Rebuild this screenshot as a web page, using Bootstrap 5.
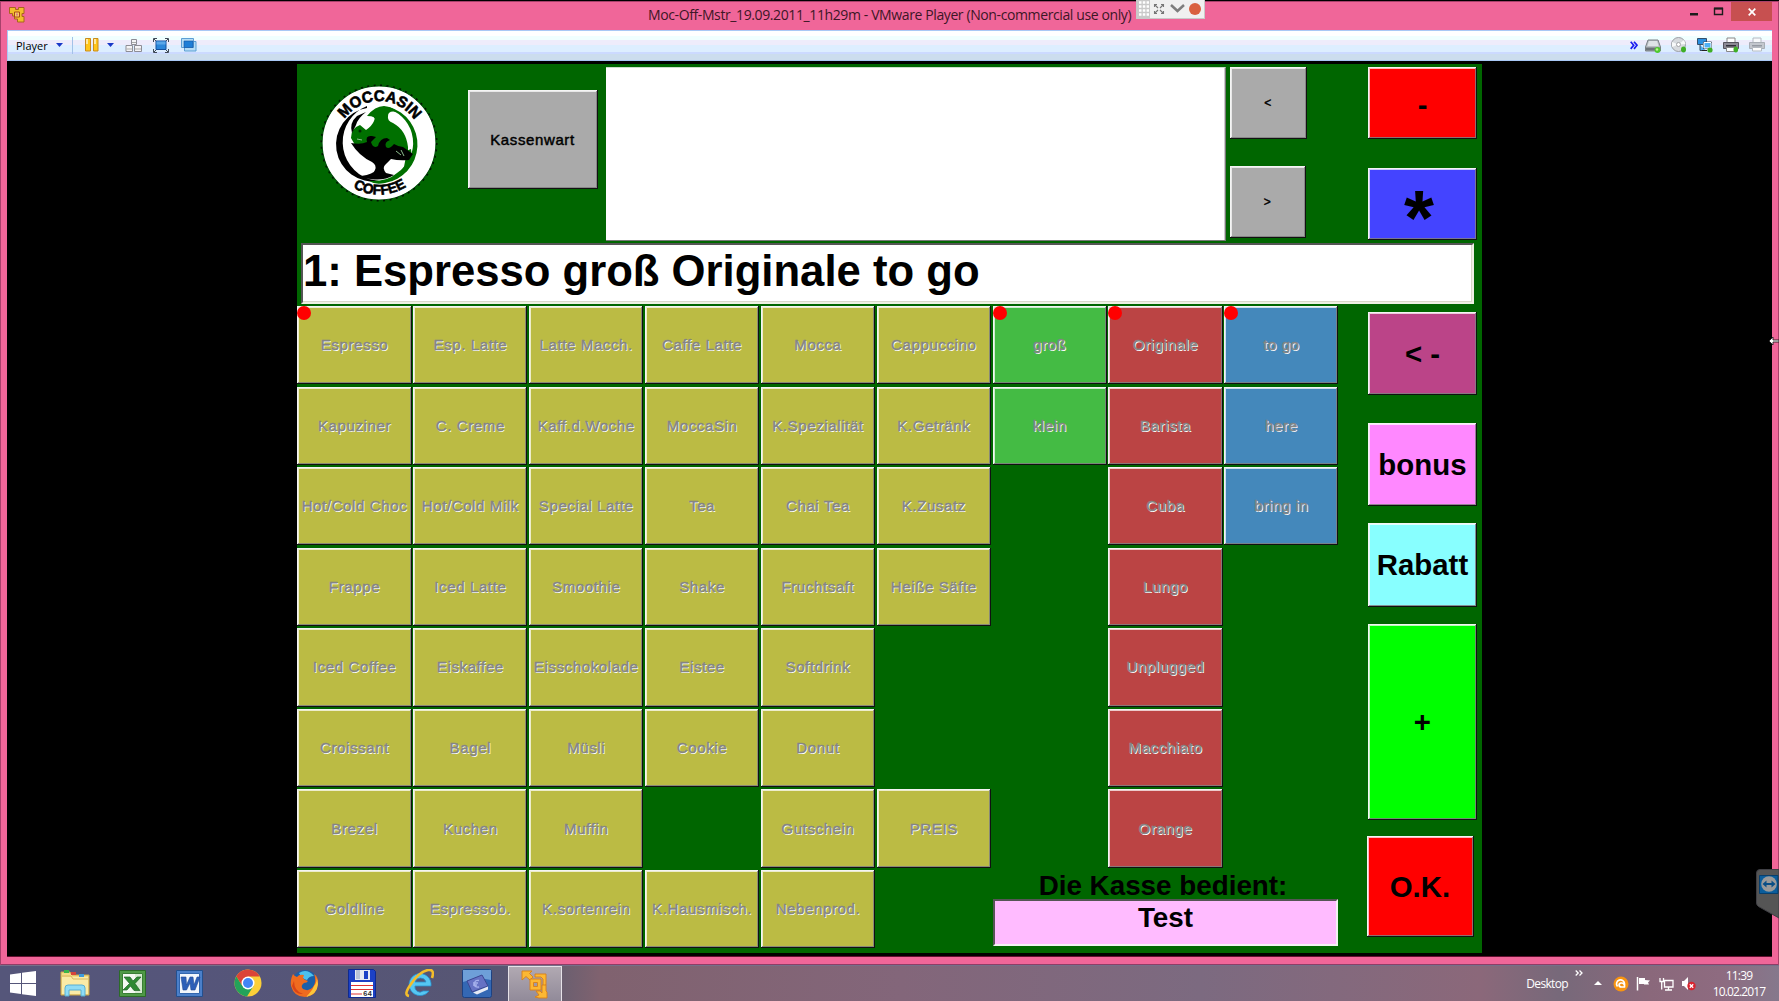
<!DOCTYPE html>
<html lang="de">
<head>
<meta charset="utf-8">
<title>Moc-Off-Mstr - VMware Player</title>
<link rel="stylesheet" href="https://cdn.jsdelivr.net/npm/bootstrap@5.3.0/dist/css/bootstrap.min.css">
<style>
  html, body { height: 100%; }
  body { width: 1779px; height: 1001px; overflow: hidden; background: #000; font-family: "Open Sans", "Noto Sans", sans-serif; line-height: 1; color: #000; }
  svg { display: block; flex: none; }

  /* window frame */
  .win-frame { height: 965px; background: #f06699; border-top: 1px solid #000; box-shadow: inset 1px 0 #a8416b, inset -1px 0 #a8416b, inset 0 1px #a8416b, inset 0 -1px #8f3d66; padding: 0 7px 8px 7px; }
  .win-title { height: 29px; }
  .win-title .caption-text { font-size: 14px; letter-spacing: -.39px; color: #3d1626; white-space: nowrap; margin-left: 623px; padding-top: 7px; line-height: 14px; }
  .win-close { width: 41px; height: 19px; background: #c75050; margin-top: 1px; }
  .tool-strip { height: 31px; border: 1px solid #a9c8f5; border-width: 1px 0 1px 1px; background: linear-gradient(#fff 0 5px, #f0ffff 5px 9px, #eeecfb 9px 14px, #ddeeff 14px 21px, #ccdaff 21px 23px, #ccddee 23px); font-size: 11px; padding-bottom: 1px; }
  .strip-sep { width: 1px; height: 17px; background: #a3c2e8; }
  .vm-screen { flex: 1; background: #000; padding: 3px 0 0 290px; border-bottom: 1px solid #601030; }

  /* cash register */
  .till { width: 1185px; height: 889px; background: #006600; font-family: "Liberation Sans", Arial, sans-serif; font-weight: 700; }
  .till-head { height: 179px; }
  .key { border: 0; border-radius: 0; padding: 0; color: #000; font-weight: 700; font-size: 15px; line-height: 1; display: flex; align-items: center; justify-content: center; white-space: nowrap; box-shadow: inset -1px -1px #111, inset 1px 1px #f4f4f4, inset -2px -2px rgba(128,128,128,.85), inset 2px 2px rgba(255,255,255,.72); }
  .key-small { font-weight: 400; letter-spacing: .62px; -webkit-text-stroke: .45px currentColor; }
  .k-gray { background: #aaa; }
  .k-red { background: #f00; }
  .receipt { width: 620px; height: 174px; background: #fff; border: 1px solid #777; border-width: 1px 1px 1px 0; border-top-color: #cdc; box-shadow: inset -1px 0 #ccc; }
  .entry-line { height: 61px; margin: 0 8px 0 4px; background: #fff; border: 2px solid #555; border-right-color: #eef0e4; border-bottom-color: #eef0e4; box-shadow: inset -1px -1px #d8d8c8; font-size: 43.65px; line-height: 51px; white-space: nowrap; }
  .till-body { padding-top: 2px; }
  .prod-grid { display: grid; grid-template-columns: repeat(9, 114.2px); grid-template-rows: repeat(8, 78.2px); column-gap: 1.68px; row-gap: 2.4px; margin-left: .4px; }
  .prod-grid .key { position: relative; color: #858585; text-shadow: 1px 1px 0 #fff; padding-bottom: 1px; }
  .k-prod { background: #bbbb44; }
  .k-size { background: #44bb44; }
  .k-kind { background: #bb4444; }
  .k-place { background: #4488bb; }
  .sel-dot::before { content: ""; position: absolute; left: 0; top: 0; width: 14px; height: 14px; border-radius: 50%; background: #f00; }
  .cashier { font-size: 27.8px; }
  .cashier-label { height: 29px; padding-top: 3px; text-align: center; padding-right: 5px; line-height: 26px; }
  .cashier-name { height: 47px; background: #ffbbff; border: 2px solid #555; border-right-color: #f2f2f2; border-bottom-color: #f2f2f2; text-align: center; line-height: 33px; }
  .side-keys { margin: 5.5px 0 0 30px; width: 109px; }
  .side-keys .key { font-size: 29.4px; width: 109px; padding: 1px 1px 0 0; }

  /* overlays */
  .tv-bar { position: absolute; left: 1136px; top: 0; width: 69px; height: 19px; }
  .tv-tab { position: absolute; left: 1756px; top: 869px; }
  .size-cursor { position: absolute; left: 1768px; top: 334px; }

  /* taskbar */
  .task-bar { height: 36px; color: #fff; background: linear-gradient(90deg, #55567a 0, #55557a 200px, #575673 500px, #6a5f70 560px, #80626f 600px, #83667a 900px, #7c6a80 1200px, #8b687a 1480px, #77697a 1560px, #8a687b 1650px, #8e6b80 1720px, #85788c 1779px); box-shadow: inset 0 1px #75708a; }
  .task-item { width: 57.4px; height: 35px; display: flex; align-items: center; justify-content: center; }
  .task-active { width: 54px; margin-left: 2px; background: linear-gradient(#b1a9b2, #918a99); border: 1px solid #e6e2e8; border-bottom: 0; }
  .clock-box { font-size: 12px; line-height: 16px; letter-spacing: -.85px; text-align: center; width: 60px; padding-top: 1px; }
</style>
</head>
<body>
<div class="win-frame d-flex flex-column">
  <div class="win-title d-flex align-items-start">
    <svg width="16" height="16" viewBox="0 0 16 16" style="margin:6px 0 0 2px"><path d="M.5.500h6v2h3v-2h5.500v6h-2v3h2v5.500H8.500v-3H5.500V9h-2V6.500h-3z" fill="#f3bd2c" stroke="#a8651c"/><path d="M5.500 5h5v5h-5z" fill="#f7d35b" stroke="#a8451c"/><path d="M7 6.500h2v2H7z" fill="#e2788d"/></svg>
    <div class="caption-text">Moc-Off-Mstr_19.09.2011_11h29m - VMware Player (Non-commercial use only)</div>
    <div class="d-flex ms-auto">
      <svg width="55" height="24" viewBox="0 0 55 24"><path d="M14 12h8v2.500h-8z" fill="#1c1c1c"/><path d="M38.500 7.500h8v6h-8z" fill="none" stroke="#1c1c1c" stroke-width="1.400"/><path d="M38 6.500h9v2h-9z" fill="#1c1c1c"/></svg>
      <div class="win-close d-flex align-items-center justify-content-center"><svg width="8" height="8" viewBox="0 0 8 8"><path d="M.7.700l6.600 6.600M7.300.7L.7 7.300" stroke="#fff" stroke-width="1.700"/></svg></div>
    </div>
  </div>

  <div class="tool-strip d-flex align-items-center">
    <span class="ms-2">Player</span>
    <svg width="7" height="5" viewBox="0 0 7 5" style="margin-left:8px"><path d="M0 0h7L3.500 4z" fill="#1838c8"/></svg>
    <div class="strip-sep" style="margin-left:9px"></div>
    <svg width="14" height="14" viewBox="0 0 14 14" style="margin-left:12px"><path d="M.5.500h5v12.500h-5zM8.500.500h4.500v12.500H8.500z" fill="#ffc61a" stroke="#c98b1d"/><path d="M1 1h2v5H1zM9 1h2v5H9z" fill="#ffe9a0"/></svg>
    <svg width="7" height="5" viewBox="0 0 7 5" style="margin-left:8px"><path d="M0 0h7L3.500 4z" fill="#1838c8"/></svg>
    <svg width="18" height="15" viewBox="0 0 18 15" style="margin-left:11px"><path d="M6.500 1.500h5v5h-5zM1 7.500h6.500v6H1zM9.500 7.500h7v6h-7z" fill="#f4f4f6" stroke="#8d8d95"/><path d="M1.500 11h6M10 11h6M7 4.500h4" stroke="#aaa"/></svg>
    <svg width="16" height="15" viewBox="0 0 16 15" style="margin-left:10px"><path d="M3 3h10v8.500H3z" fill="#2b86d9" stroke="#15509d"/><path d="M3.500 3.500h9v3h-9z" fill="#5aa6e8"/><path d="M.5 4V.500H4M12 .5h3.500V4M15.500 11v3.500H12M4 14.500H.5V11M1 1l2 2M15 1l-2 2M1 14l2-2M15 14l-2-2" fill="none" stroke="#404a58"/></svg>
    <svg width="16" height="14" viewBox="0 0 16 14" style="margin-left:12px"><path d="M.5.500h12v9H.5zM3.500 3.500h11.500v9.500H3.500z" fill="#b4dcf5" stroke="#5d9fd4"/><path d="M3 3h9v6.500H3z" fill="#1f7ed6" stroke="#15509d" stroke-width=".6"/></svg>
    <div class="d-flex align-items-center ms-auto" style="margin-right:7px;gap:10px">
      <svg width="8" height="9" viewBox="0 0 8 9" style="margin-right:-3px"><path d="M.7.700l3 3.500-3 3.700M4 .7l3 3.500-3 3.700" fill="none" stroke="#1c1cf0" stroke-width="1.700"/></svg>
      <svg width="16" height="15" viewBox="0 0 16 15"><path d="M3 2h10l2.500 7v4H.5V9z" fill="#b9bec4" stroke="#7b8085"/><path d="M1 9.500h14v3H1z" fill="#6d7479"/><path d="M4 3h8l1.500 5h-11z" fill="#dfe3e6"/><circle cx="12.500" cy="12" r="2.900" fill="#4fc92e"/><circle cx="12" cy="11.500" r="1.200" fill="#b8f58e"/></svg>
      <svg width="16" height="16" viewBox="0 0 16 16"><circle cx="7.500" cy="7.500" r="7" fill="#d7dade" stroke="#9b9fa5"/><path d="M7.500 7.500L1 5v5zM7.500 7.500L13 3l1.500 4z" fill="#f8f9fa"/><circle cx="7.500" cy="7.500" r="2" fill="#fff" stroke="#a5a5aa"/><ellipse cx="12.500" cy="12.500" rx="2.500" ry="3" fill="#3fae26"/></svg>
      <svg width="16" height="16" viewBox="0 0 16 16"><path d="M.5 1.500h9v6h-9z" fill="#2b8fe0" stroke="#36506b"/><path d="M3 8v5.500h6M6.500 5h8v6.500h-8z" fill="#4fb1f5" stroke="#34485d"/><path d="M7 5.500h7v5.500H7z" fill="none" stroke="#fff"/><path d="M5 13.500h5" stroke="#222"/><circle cx="13" cy="13" r="2.600" fill="#3fae26"/></svg>
      <svg width="16" height="16" viewBox="0 0 16 16"><path d="M4 1h8v6H4z" fill="#fff" stroke="#888"/><path d="M.5 5.500h15v6H.5z" fill="#8d8a95" stroke="#57545e"/><path d="M3 8h10v1.500H3z" fill="#33303a"/><path d="M3.500 10.500h9v4h-9z" fill="#fff" stroke="#888"/><ellipse cx="12.800" cy="12.500" rx="2.300" ry="3" fill="#3fae26"/></svg>
      <svg width="16" height="16" viewBox="0 0 16 16"><path d="M4 1h8v6H4z" fill="#f8fafc" stroke="#b4bac2"/><path d="M.5 5.500h15v6H.5z" fill="#c3c7ce" stroke="#a8adb5"/><path d="M3 8h10v1.500H3z" fill="#9499a2"/><path d="M3.500 10.500h9v3.500h-9z" fill="#fff" stroke="#b4bac2"/></svg>
    </div>
  </div>

  <div class="vm-screen">
    <div class="till">
      <div class="till-head d-flex align-items-start">
        <svg width="120" height="120" viewBox="-60 -60 120 120" style="margin:19px 0 0 21.500px">
          <defs>
            <path id="arcTop" d="M-42 0A42 42 0 0 1 42 0"/>
            <path id="arcLow" d="M-51.500 0A51.500 51.500 0 0 0 51.500 0"/>
          </defs>
          <circle r="57" fill="#fff" stroke="#00500a" stroke-width="1.200"/>
          <circle r="57.800" fill="none" stroke="#001500" stroke-width="1.500" stroke-dasharray="2 4.500"/>
          <path d="M-12-37A39 39 0 0 0-10 36L0 38A36 36 0 0 1-12-35z" fill="#000"/>
          <path d="M10-36A39 39 0 0 1 6 40Q-4 42-10 38Q8 39 18 30A36 36 0 0 0 10-34z" fill="#007000"/>
          <path d="M27 8Q27 24 20 34L28 28Q34 15 32 6z" fill="#007000"/>
          <path d="M-28-5Q-28-15-19-18L-13-13Q-7-17-5-22Q-2-27-12-27Q-4-37 5-37Q14-36 18-31Q9-33 9-27Q8-22 14-20Q27-13 29 4L29 11L12 8L-24 2z" fill="#007000"/>
          <path d="M-28 0Q-18 2-12-1Q-14-8-7-7L-3-6L-8-1Q-6 6-1 3Q1-5 8-5L11-3Q5-1 7 4Q10 7 15 1Q20 4 24 4L34 11L30 17Q20 18 12 16L6 22Q3 25 7 30L15 32Q5 38-8 36Q-15 36-18 33Q-5 31-4 27Q-2 22-7 19Q-20 13-28 0z" fill="#000"/>
          <path d="M-22-27Q-30-20-27-10L-23-18Q-21-25-13-31z" fill="#000"/>
          <circle cx="-19" cy="-12" r="1.500" fill="#002800"/>
          <path d="M-22-4l5 1M17 8l5 4M22 7l3 6" stroke="#8fbf8f"/>
          <g font-family="Liberation Sans" fill="#000" stroke="#000" stroke-width=".6">
            <text font-size="15.500" text-anchor="middle"><textPath href="#arcTop" startOffset="50.500%" textLength="82" lengthAdjust="spacingAndGlyphs">MOCCASIN</textPath></text>
            <text font-size="14" text-anchor="middle"><textPath href="#arcLow" startOffset="50.500%" textLength="56" lengthAdjust="spacingAndGlyphs">COFFEE</textPath></text>
          </g>
        </svg>
        <button class="key key-small k-gray" style="width:130px;height:99px;margin:26px 0 0 29px;padding-bottom:1px">Kassenwart</button>
        <div class="receipt" style="margin:3px 0 0 8px"></div>
        <div class="d-flex flex-column" style="margin:3px 0 0 4px;gap:27px">
          <button class="key key-small k-gray" style="width:77px;height:72px;font-size:12px">&lt;</button>
          <button class="key key-small k-gray" style="width:76px;height:72px;font-size:12px">&gt;</button>
        </div>
        <div class="d-flex flex-column" style="margin:3px 0 0 61px;gap:29px">
          <button class="key k-red" style="width:109px;height:72px;font-size:29px;padding:5px 0 0 1px">-</button>
          <button class="key" style="width:109px;height:72px;background:#4444ff;font-size:77px;padding:28px 6px 0 0">*</button>
        </div>
      </div>

      <div class="entry-line">1: Espresso groß Originale to go</div>

      <div class="till-body d-flex align-items-start">
        <div class="prod-grid" id="prodGrid">
          <div class="cashier" style="grid-area:8/7/9/10">
            <div class="cashier-label">Die Kasse bedient:</div>
            <div class="cashier-name">Test</div>
          </div>
        </div>
        <div class="side-keys d-flex flex-column">
          <button class="key" style="height:83px;background:#bb4488">&lt; -</button>
          <button class="key" style="height:83px;background:#ff88ff;margin-top:28px">bonus</button>
          <button class="key" style="height:84px;background:#88ffff;margin-top:17px">Rabatt</button>
          <button class="key" style="height:196px;background:#00ff00;margin-top:17px">+</button>
          <button class="key k-red" style="height:101px;width:107px;margin:16px 0 0 -1.500px">O.K.</button>
        </div>
      </div>
    </div>
  </div>
</div>

<div class="task-bar d-flex align-items-center">
  <div class="d-flex justify-content-center" style="width:46.500px"><svg width="26" height="25" viewBox="0 0 26 25"><path d="M0 3.500L11 2v10H0zM12 1.800L26 0v12H12zM0 13h11v10L0 21.500zM12 13h14v12l-14-1.800z" fill="#fff"/></svg></div>
  <div class="task-item"><svg width="30" height="28" viewBox="0 0 30 28"><path d="M1 3h9l2 3h17v20H1z" fill="#f5dc86" stroke="#c9a548"/><path d="M4 1h5v3H4z" fill="#3bb54a"/><path d="M11 3h5v3h-5z" fill="#d6453a"/><path d="M19 5h5v3h-5z" fill="#3f9bdc"/><path d="M2 8h26v17H2z" fill="#fbeba7"/><path d="M2 7h9l2 3h15" fill="none" stroke="#d8b860"/><path d="M5 27v-8q0-3 3-3h14q3 0 3 3v8h-4v-6H9v6z" fill="#8fdcf6" stroke="#58aed2"/></svg></div>
  <div class="task-item"><svg width="27" height="27" viewBox="0 0 27 27"><path d="M.5.500h26v26H.5z" fill="#4f9a46" stroke="#2b6b28"/><path d="M3.500 3.500h20v20h-20z" fill="#f4f9f2" stroke="#3a7d35"/><path d="M16 4h7v19h-7z" fill="#d7ebd3"/><path d="M5 7h6l3 4 4-4h4l-6 6.500 5 7h-6l-3.500-4.500L8 20H4l6.500-6.500z" fill="#2f8a34" stroke="#1f6426" stroke-width=".7"/></svg></div>
  <div class="task-item"><svg width="27" height="27" viewBox="0 0 27 27"><path d="M.5.500h26v26H.5z" fill="#4b7fc9" stroke="#23508f"/><path d="M3.500 3.500h20v20h-20z" fill="#f2f6fc" stroke="#3366ae"/><path d="M5 7h5l.5 8L14 7h3l1 8 3-8h3l-5 13h-4l-1-7-3.500 7H7z" fill="#2d5fb8" stroke="#234b96" stroke-width=".6"/></svg></div>
  <div class="task-item" style="padding-left:2px"><svg width="28" height="28" viewBox="-14 -14 28 28"><circle r="13.500" fill="#fbcf38"/><path d="M-11.700-6.750A13.500 13.500 0 0 0-1 13.500L5.500 3 0 0-5.500 3z" fill="#24a35a"/><path d="M-11.700-6.750L-5.500 3 0-6.500h11.800A13.500 13.500 0 0 0-11.700-6.750z" fill="#db4437"/><circle r="6.500" fill="#fff"/><circle r="5" fill="#4285f4"/></svg></div>
  <div class="task-item"><svg width="29" height="29" viewBox="0 0 29 29"><circle cx="15" cy="14" r="13" fill="#1c5fa8"/><path d="M9 4Q17-1 24 7Q19 7 17 11Q12 10 9 4z" fill="#4cc0ee"/><path d="M3 5Q0 11 1 17Q4 28 15 28Q26 27 28 16Q29 8 24 5Q27 12 23 18Q19 23 13 20Q10 17 14 14Q17 14 18 12Q14 11 13 9L14 6Q9 5 7 8Q4 7 3 5z" fill="#ef6b1f"/><path d="M28 15Q27 26 16 28Q22 22 24 17Q28 12 26 8Q28 11 28 15z" fill="#fcc53a"/><path d="M4 12Q4 22 13 25Q5 26 2 17z" fill="#d84418"/></svg></div>
  <div class="task-item"><svg width="28" height="29" viewBox="0 0 28 29"><path d="M.5.500h25l2 2V28.500H.5z" fill="#1c41c6" stroke="#0f2a90"/><path d="M7 1h15v10H7z" fill="#e7eaf2"/><path d="M8 1h4v9H8z" fill="#b9c4d8"/><path d="M16 2h4v8h-4z" fill="#1c41c6"/><path d="M3 13h22v15H3z" fill="#fff"/><path d="M3 16.500h22M3 20.500h22M3 25h11" stroke="#df3434"/><text x="15" y="26.500" font-family="Liberation Mono" font-weight="700" font-size="7.500" fill="#333">64</text></svg></div>
  <div class="task-item"><svg width="29" height="29" viewBox="0 0 29 29"><path d="M26 17A11 11 0 1 0 24 22h-6A5 5 0 0 1 10 17zM10 13Q11 9 15.500 9T21 13z" fill="#56c7f2" fill-rule="evenodd" stroke="#2a92cf" stroke-width=".8"/><path d="M4 27Q-2 26 6 15Q14 3 23 1Q30 0 27 9" fill="none" stroke="#f4bd2a" stroke-width="2.600"/></svg></div>
  <div class="task-item"><svg width="30" height="29" viewBox="0 0 30 29"><rect x=".5" y=".5" width="29" height="28" rx="2" fill="#3468b4" stroke="#1d4283"/><path d="M1 1h28v10Q15 7 1 13z" fill="#6e9fd8"/><path d="M5 12L20 6l6 11-16 6z" fill="#6672c4" stroke="#3c4792"/><path d="M11 23.500l15-6v3l-11 5z" fill="#e6eaf5"/><path d="M17 11.500q-4-1-4.500 3t4.500 3.500M11 14h5M11 16h4" fill="none" stroke="#a6b1ec" stroke-width="1.300"/></svg></div>
  <div class="task-item task-active align-self-end"><svg width="27" height="29" viewBox="0 0 27 29"><g fill="#fcb833" stroke="#d98016" stroke-width=".9" stroke-linejoin="round"><path d="M1 1h10L8.500 3.500 12 7l-3 3-4-3.500L1 10z"/><path d="M14 4h11v11l-3 1V9l-2-2h-6z"/><path d="M21 15h4v6l1 1v6h-8l-4-1 4-2-3-4h4l2 2z"/><path d="M9 9h11v11H9zM12.500 12.500v4h4v-4z" fill-rule="evenodd"/></g></svg></div>

  <div class="d-flex align-items-center ms-auto" style="padding-right:10px">
    <span style="font-size:12px;letter-spacing:-.650px;margin-top:1px">Desktop</span>
    <svg width="8" height="7" viewBox="0 0 8 7" style="margin:-20px 0 0 7px"><path d="M.7.500l2.500 2.500L.7 5.500M4.500.500L7 3 4.500 5.500" fill="none" stroke="#fff" stroke-width="1.300"/></svg>
    <svg width="8" height="5" viewBox="0 0 8 5" style="margin:1px 0 0 11px"><path d="M4 0l4 4H0z" fill="#fff"/></svg>
    <svg width="16" height="16" viewBox="0 0 16 16" style="margin:1px 0 0 11px"><circle cx="8" cy="8" r="7.500" fill="#f79412"/><path d="M4.500 10.500A4 4 0 1 1 11.500 8v3.500M11 8.500a2.500 2 0 1 0-2.500 2.500h3.500" fill="none" stroke="#fff" stroke-width="1.700"/></svg>
    <svg width="15" height="15" viewBox="0 0 15 15" style="margin:1px 0 0 7px"><path d="M1.500 1v13.500" stroke="#fff" stroke-width="1.500"/><path d="M3 2h6v2l5 .5-2 2 1 2H8V8H3z" fill="#fff"/></svg>
    <svg width="15" height="14" viewBox="0 0 15 14" style="margin:1px 0 0 8px"><path d="M5.500 3.500h8.500v6.500H5.500zM9.500 10v3M6 13h7M1 1v3.500h3.500V1M2.700 4.500v8" fill="none" stroke="#fff" stroke-width="1.300"/></svg>
    <svg width="15" height="15" viewBox="0 0 15 15" style="margin:1px 0 0 7px"><path d="M1 5h2l4-4v13l-4-4H1z" fill="#fff"/><circle cx="10.500" cy="10" r="4.200" fill="#d9232e"/><path d="M8.800 8.300l3.400 3.400M12.200 8.300l-3.400 3.400" stroke="#fff" stroke-width="1.300"/></svg>
    <div class="clock-box" style="margin-left:13px">11:39<br>10.02.2017</div>
  </div>
</div>

<svg class="tv-bar" viewBox="0 0 69 19"><path d="M0 0h69v19H0z" fill="#c9c9c9"/><path d="M14 0h54v18H14z" fill="#f0f0f0"/><path d="M3 2.500h10M3 6.500h10M3 10.500h10M3 14.500h10" stroke="#fff" stroke-width="2.500" stroke-dasharray="2.500 1.300"/><path d="M18.500 7V4.500H21M25 4.500h2.500V7M27.500 11v2.500H25M21 13.500h-2.500V11M19 5l3 3M27 5l-3 3M19 13l3-3M27 13l-3-3" fill="none" stroke="#777" stroke-width="1.100"/><path d="M35 5l6.500 6L48 5" fill="none" stroke="#7d7d7d" stroke-width="2.500"/><circle cx="59" cy="9" r="6" fill="#d9603f"/></svg>
<svg class="size-cursor" width="11" height="14" viewBox="0 0 11 14"><path d="M1 7l4-4v3h6v2H5v3z" fill="#fff" stroke="#222" stroke-width=".9"/></svg>
<svg class="tv-tab" width="23" height="50" viewBox="0 0 23 50"><path d="M23 .5H4Q.5.500.5 4v30q0 2 2 3.500L23 49z" fill="#555" stroke="#3f3f44"/><path d="M3.500 6.500H22v18H3.500z" fill="#0b5d9b" stroke="#083f6d"/><circle cx="13" cy="15" r="7.800" fill="#9a9a9a"/><path d="M6.500 15l4-3.500V14h5v-2.500l4 3.500-4 3.500V16h-5v2.500z" fill="#0b4f86"/></svg>

<script>
  const rows = [
    ['Espresso', 'Esp. Latte', 'Latte Macch.', 'Caffe Latte', 'Mocca', 'Cappuccino', 'groß', 'Originale', 'to go'],
    ['Kapuziner', 'C. Creme', 'Kaff.d.Woche', 'MoccaSin', 'K.Spezialität', 'K.Getränk', 'klein', 'Barista', 'here'],
    ['Hot/Cold Choc', 'Hot/Cold Milk', 'Special Latte', 'Tea', 'Chai Tea', 'K.Zusatz', '', 'Cuba', 'bring in'],
    ['Frappe', 'Iced Latte', 'Smoothie', 'Shake', 'Fruchtsaft', 'Heiße Säfte', '', 'Lungo'],
    ['Iced Coffee', 'Eiskaffee', 'Eisschokolade', 'Eistee', 'Softdrink', '', '', 'Unplugged'],
    ['Croissant', 'Bagel', 'Müsli', 'Cookie', 'Donut', '', '', 'Macchiato'],
    ['Brezel', 'Kuchen', 'Muffin', '', 'Gutschein', 'PREIS', '', 'Orange'],
    ['Goldline', 'Espressob.', 'K.sortenrein', 'K.Hausmisch.', 'Nebenprod.']
  ];
  const kinds = ['k-size', 'k-kind', 'k-place'];
  const grid = document.getElementById('prodGrid');
  rows.forEach((r, y) => r.forEach((label, x) => {
    if (!label) return;
    const b = document.createElement('button');
    b.className = 'key key-small ' + (kinds[x - 6] || 'k-prod');
    if (y === 0 && [0, 6, 7, 8].includes(x)) b.classList.add('sel-dot');
    b.style.gridArea = `${y + 1}/${x + 1}`;
    b.textContent = label;
    grid.append(b);
  }));
</script>
<script src="https://cdn.jsdelivr.net/npm/bootstrap@5.3.0/dist/js/bootstrap.bundle.min.js"></script>
</body>
</html>
